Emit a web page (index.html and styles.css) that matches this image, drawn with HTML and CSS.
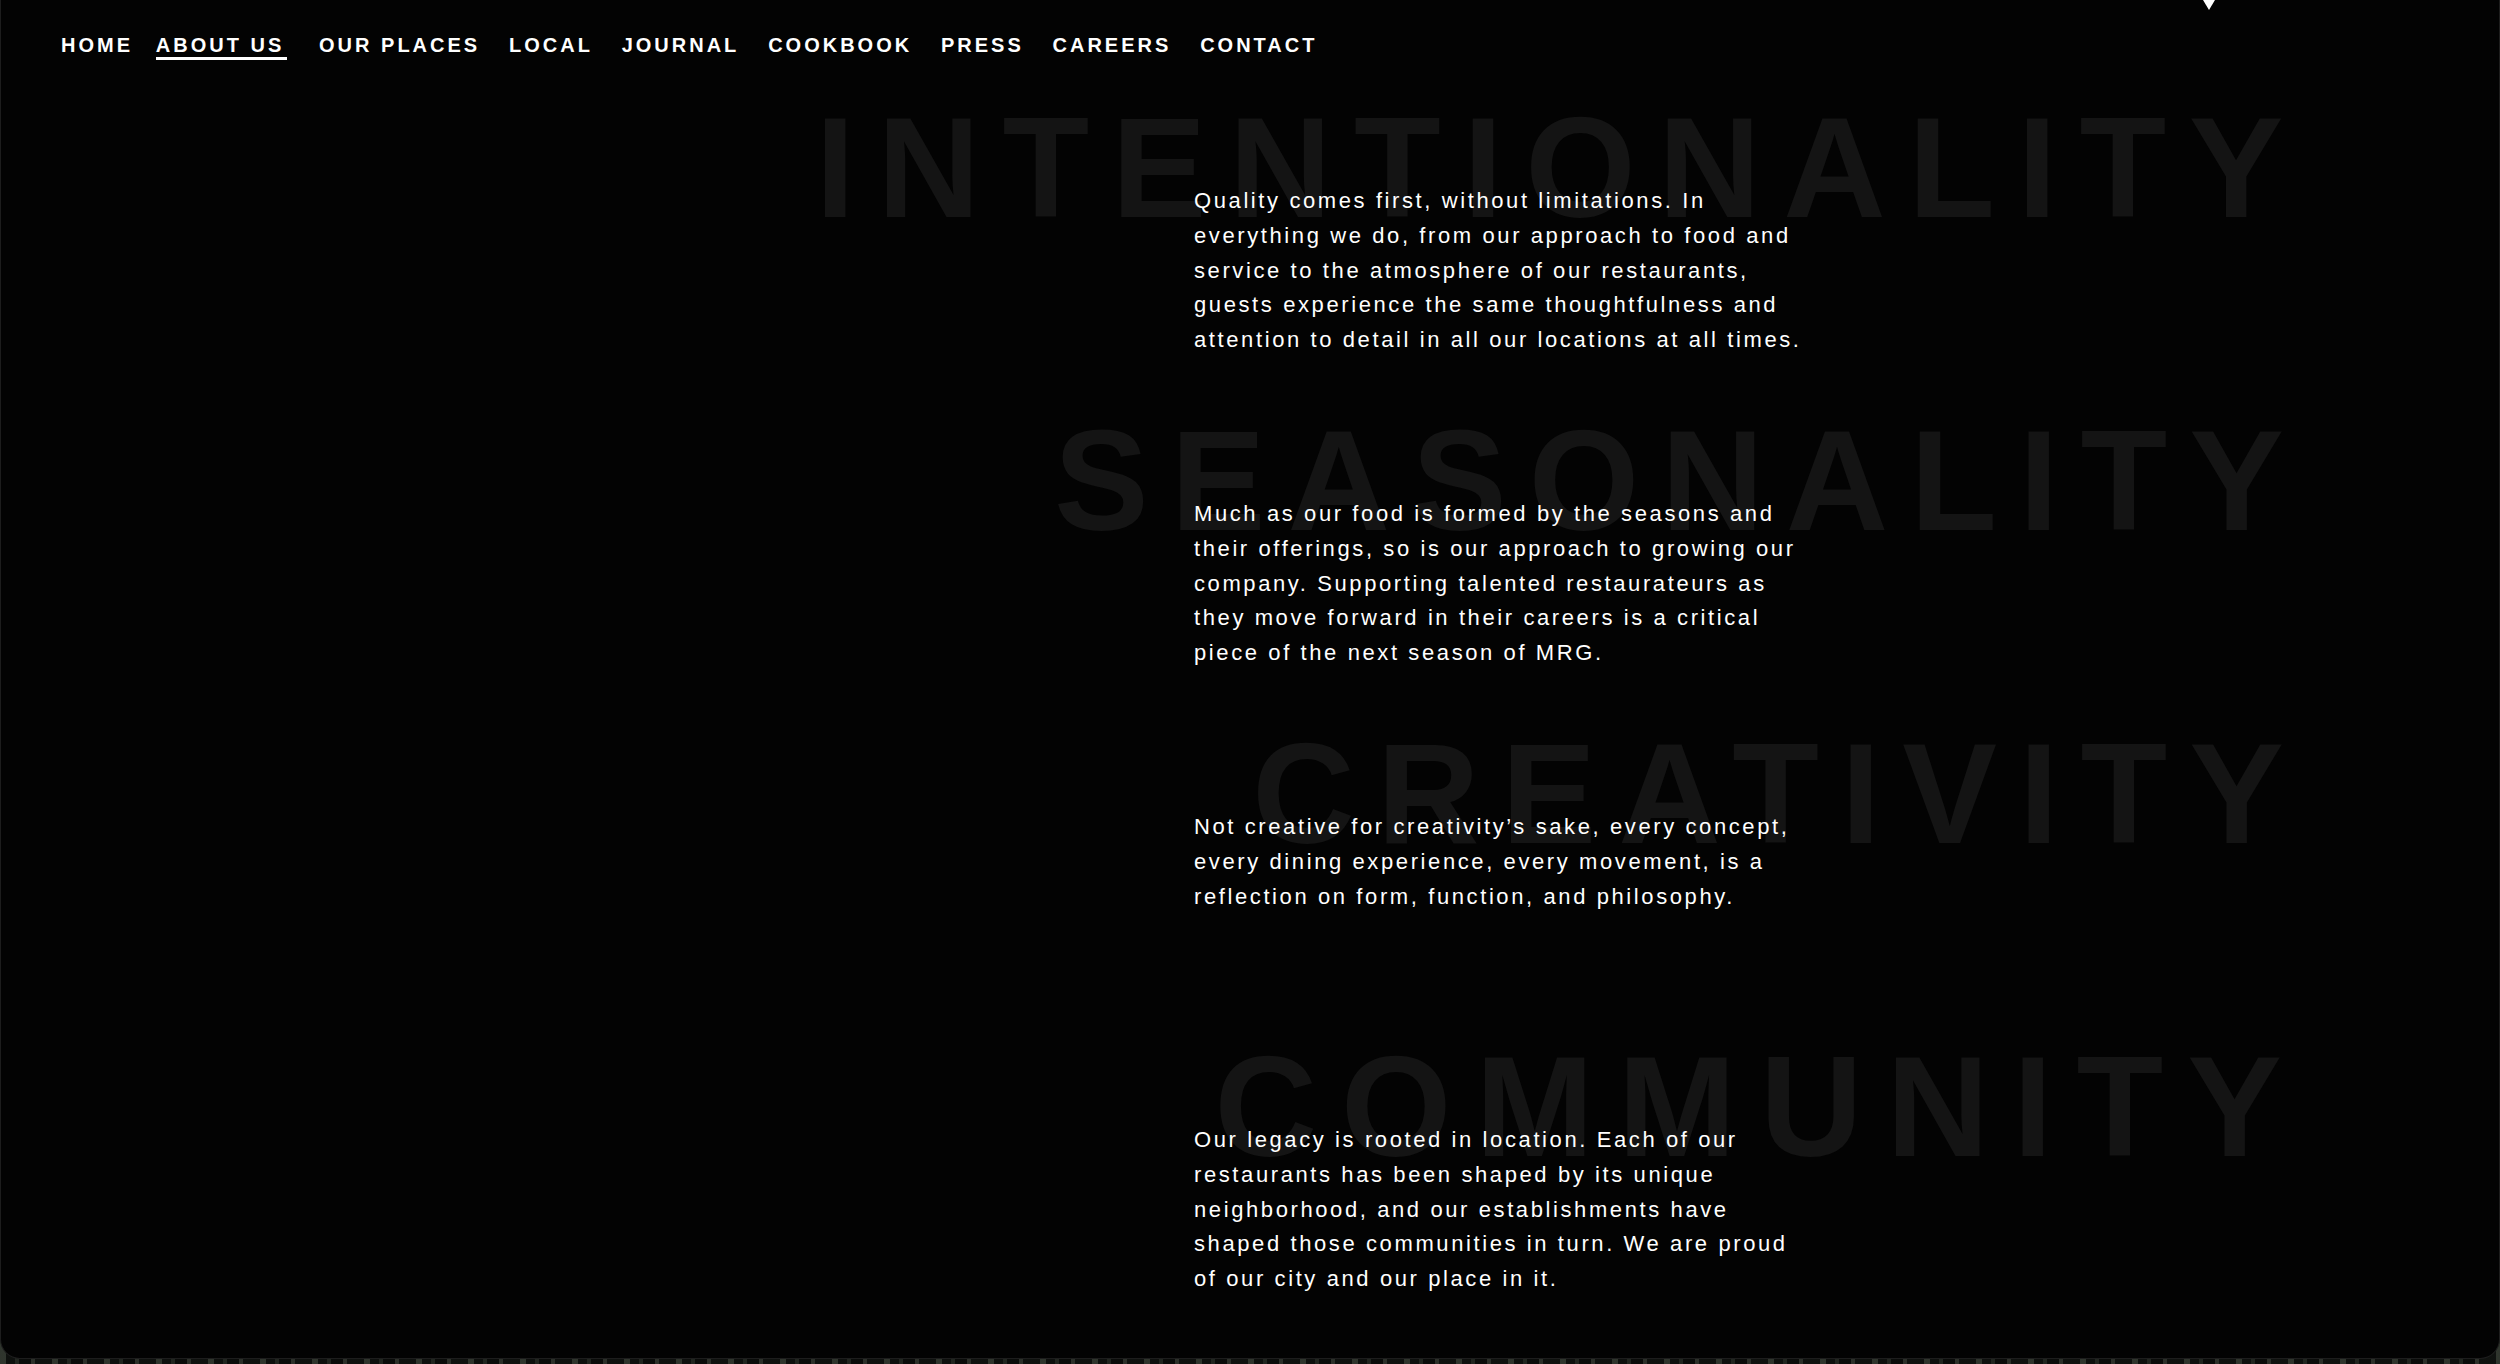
FILE: index.html
```html
<!DOCTYPE html>
<html lang="en">
<head>
<meta charset="utf-8">
<title>About Us</title>
<link rel="stylesheet" href="styles.css">
</head>
<body>
<div class="panel">
  <span class="marker"></span>
  <nav class="nav">
    <a class="nav-link" href="#">HOME</a>
    <a class="nav-link is-active" href="#">ABOUT US</a>
    <a class="nav-link" href="#">OUR PLACES</a>
    <a class="nav-link" href="#">LOCAL</a>
    <a class="nav-link" href="#">JOURNAL</a>
    <a class="nav-link" href="#">COOKBOOK</a>
    <a class="nav-link" href="#">PRESS</a>
    <a class="nav-link" href="#">CAREERS</a>
    <a class="nav-link" href="#">CONTACT</a>
  </nav>
  <main class="values">
    <section class="value">
      <h2 class="value-word value-word--long">INTENTIONALITY</h2>
      <p class="value-text">Quality comes first, without limitations. In everything we do, from our approach to food and service to the atmosphere of our restaurants, guests experience the same thoughtfulness and attention to detail in all our locations at all times.</p>
    </section>
    <section class="value">
      <h2 class="value-word">SEASONALITY</h2>
      <p class="value-text">Much as our food is formed by the seasons and their offerings, so is our approach to growing our company. Supporting talented restaurateurs as they move forward in their careers is a critical piece of the next season of MRG.</p>
    </section>
    <section class="value">
      <h2 class="value-word">CREATIVITY</h2>
      <p class="value-text">Not creative for creativity’s sake, every concept, every dining experience, every movement, is a reflection on form, function, and philosophy.</p>
    </section>
    <section class="value">
      <h2 class="value-word value-word--wide">COMMUNITY</h2>
      <p class="value-text">Our legacy is rooted in location. Each of our restaurants has been shaped by its unique neighborhood, and our establishments have shaped those communities in turn. We are proud of our city and our place in it.</p>
    </section>
  </main>
</div>
</body>
</html>
```

FILE: styles.css
```css
html, body {
  margin: 0;
  padding: 0;
}

body {
  width: 2500px;
  height: 1364px;
  overflow: hidden;
  font-family: "Liberation Sans", Arial, sans-serif;
  background-color: #141714;
  background-image:
    repeating-linear-gradient(90deg, rgba(70,78,66,0.55) 0 6px, rgba(10,12,10,0.6) 6px 15px, rgba(46,52,44,0.5) 15px 19px, rgba(6,7,6,0.7) 19px 31px, rgba(90,96,84,0.35) 31px 35px, rgba(12,14,12,0.6) 35px 52px);
}

.panel {
  position: relative;
  box-sizing: border-box;
  width: 2500px;
  height: 1359px;
  background: #030303;
  border: 1px solid #1d1d1d;
  border-top: none;
  border-radius: 0 0 20px 20px;
  overflow: hidden;
}

.marker {
  position: absolute;
  top: 0;
  left: 2202px;
  width: 0;
  height: 0;
  border-left: 6px solid transparent;
  border-right: 6px solid transparent;
  border-top: 10px solid #ffffff;
}

.nav {
  box-sizing: border-box;
  height: 97px;
  display: flex;
  align-items: flex-start;
  gap: 28.8px;
  padding: 35px 0 0 60px;
}

.nav-link {
  display: block;
  color: #ffffff;
  text-decoration: none;
  font-weight: 700;
  font-size: 20px;
  line-height: 20px;
  letter-spacing: 3px;
  padding-bottom: 2px;
  border-bottom: 3px solid transparent;
}

.nav-link.is-active {
  margin-left: -6px;
  margin-right: 3px;
  padding-right: 3px;
  border-bottom-color: #ffffff;
}

.values {
  display: flex;
  flex-direction: column;
}

.value {
  display: grid;
  height: 313px;
}

.value-word,
.value-text {
  grid-area: 1 / 1;
}

.value-word {
  justify-self: end;
  align-self: start;
  margin: 0 193px 0 0;
  font-weight: 700;
  font-size: 142px;
  line-height: 1;
  letter-spacing: 22px;
  color: #141414;
  white-space: nowrap;
}

.value-word--long {
  letter-spacing: 22.5px;
}

.value-word--wide {
  letter-spacing: 24px;
}

.value-text {
  align-self: start;
  justify-self: start;
  width: 615px;
  margin: 87px 0 0 1193px;
  font-size: 22px;
  line-height: 34.8px;
  letter-spacing: 2.6px;
  color: #ffffff;
}
```
